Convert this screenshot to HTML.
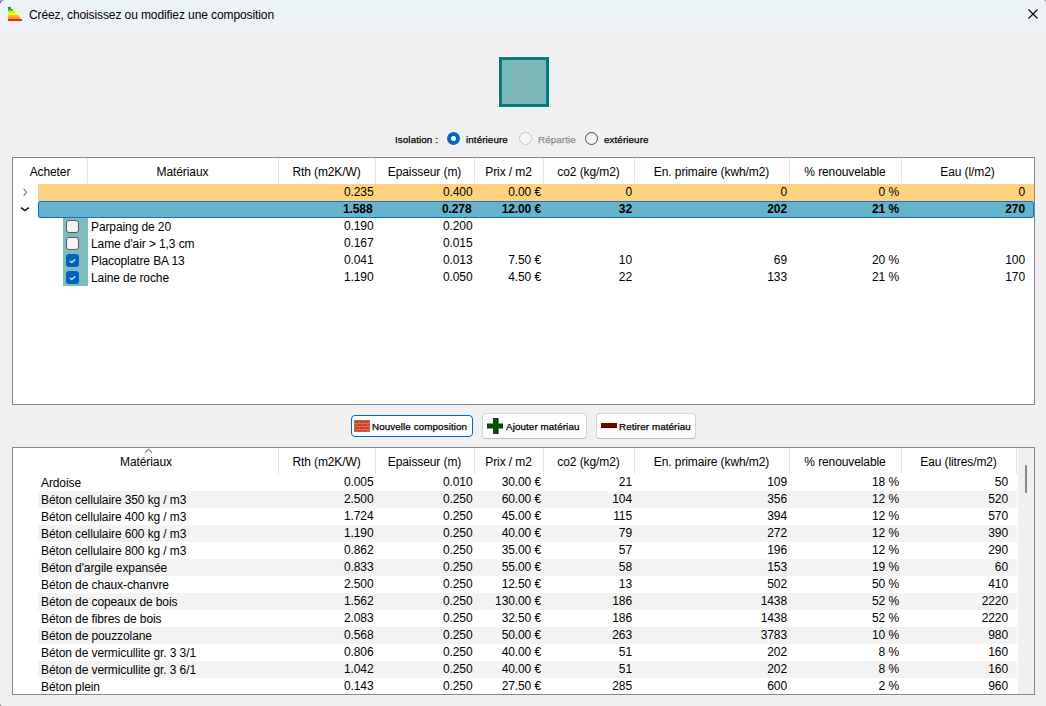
<!DOCTYPE html>
<html><head><meta charset="utf-8"><style>
html,body{margin:0;padding:0}
body{width:1046px;height:706px;position:relative;overflow:hidden;background:#F0F0F0;font-family:"Liberation Sans",sans-serif;color:#000}
.t,.h,.s{position:absolute;white-space:nowrap}
.t{font-size:12.0px;line-height:16px;letter-spacing:-0.1px}
.h{font-size:12.0px;line-height:26px;letter-spacing:-0.1px}
.s{font-size:9.8px;line-height:14px;letter-spacing:0.1px;-webkit-text-stroke:0.25px currentColor}
.b{font-weight:bold}
.c{text-align:center}
</style></head><body>
<div style="position:absolute;left:0px;top:0px;width:1046px;height:30px;background:#EBF3F7"></div>
<div style="position:absolute;left:8px;top:7px;width:3px;height:2px;background:#1F9A1F"></div>
<div style="position:absolute;left:8px;top:9px;width:5px;height:2px;background:#2FC62F"></div>
<div style="position:absolute;left:8px;top:11px;width:7px;height:2px;background:#C6EE3A"></div>
<div style="position:absolute;left:8px;top:13px;width:9px;height:2px;background:#FFF800"></div>
<div style="position:absolute;left:8px;top:15px;width:11px;height:2px;background:#FFC400"></div>
<div style="position:absolute;left:8px;top:17px;width:12px;height:2px;background:#FF9430"></div>
<div style="position:absolute;left:8px;top:19px;width:14px;height:2px;background:#FF1E1E"></div>
<div class="t" style="left:29px;top:8px;line-height:14px;color:#000">Créez, choisissez ou modifiez une composition</div>
<svg style="position:absolute;left:1027px;top:8px" width="12" height="12" viewBox="0 0 12 12"><path d="M1.5 1.5 L10.5 10.5 M10.5 1.5 L1.5 10.5" stroke="#000" stroke-width="1.1" fill="none"/></svg>
<div style="position:absolute;left:499px;top:57px;width:50px;height:50px;box-sizing:border-box;border:3px solid #007C7C;background:#7BB7B9;outline:1px solid #F7F7F7"></div>
<div class="s" style="left:395px;top:133px;">Isolation :</div>
<div style="position:absolute;left:447px;top:132px;width:13px;height:13px;border-radius:50%;background:#0067C0"></div>
<div style="position:absolute;left:451px;top:136px;width:5px;height:5px;border-radius:50%;background:#fff"></div>
<div class="s" style="left:466px;top:133px;">intérieure</div>
<div style="position:absolute;left:519px;top:132px;width:13px;height:13px;box-sizing:border-box;border-radius:50%;border:1px solid #C8C8C8;background:#F6F6F6"></div>
<div class="s" style="left:538px;top:133px;color:#8C8C8C">Répartie</div>
<div style="position:absolute;left:585px;top:132px;width:13px;height:13px;box-sizing:border-box;border-radius:50%;border:1px solid #4A4A4A;background:#F3F3F3"></div>
<div class="s" style="left:604px;top:133px;">extérieure</div>
<div style="position:absolute;left:12px;top:157px;width:1023px;height:248px;box-sizing:border-box;border:1px solid #828790;background:#fff"></div>
<div style="position:absolute;left:87px;top:158px;width:1px;height:26px;background:#E5E5E5"></div>
<div style="position:absolute;left:278px;top:158px;width:1px;height:26px;background:#E5E5E5"></div>
<div style="position:absolute;left:375px;top:158px;width:1px;height:26px;background:#E5E5E5"></div>
<div style="position:absolute;left:474px;top:158px;width:1px;height:26px;background:#E5E5E5"></div>
<div style="position:absolute;left:543px;top:158px;width:1px;height:26px;background:#E5E5E5"></div>
<div style="position:absolute;left:634px;top:158px;width:1px;height:26px;background:#E5E5E5"></div>
<div style="position:absolute;left:789px;top:158px;width:1px;height:26px;background:#E5E5E5"></div>
<div style="position:absolute;left:901px;top:158px;width:1px;height:26px;background:#E5E5E5"></div>
<div class="h c" style="left:13px;width:74px;top:159px;">Acheter</div>
<div class="h c" style="left:87px;width:191px;top:159px;">Matériaux</div>
<div class="h c" style="left:278px;width:97px;top:159px;">Rth (m2K/W)</div>
<div class="h c" style="left:375px;width:99px;top:159px;">Epaisseur (m)</div>
<div class="h c" style="left:474px;width:69px;top:159px;">Prix / m2</div>
<div class="h c" style="left:543px;width:91px;top:159px;">co2 (kg/m2)</div>
<div class="h c" style="left:634px;width:155px;top:159px;">En. primaire (kwh/m2)</div>
<div class="h c" style="left:789px;width:112px;top:159px;">% renouvelable</div>
<div class="h c" style="left:901px;width:133px;top:159px;">Eau (l/m2)</div>
<div style="position:absolute;left:38px;top:184px;width:996px;height:17px;background:#FED27F"></div>
<div style="position:absolute;left:38px;top:201px;width:996px;height:17px;box-sizing:border-box;border:1px solid #0A72D2;border-radius:2px;background:#66B4CC"></div>
<svg style="position:absolute;left:21px;top:187px" width="10" height="11" viewBox="0 0 10 11"><path d="M2.6 1.6 L5.6 5.2 L2.6 8.8" stroke="#7A7A7A" stroke-width="1.1" fill="none"/></svg>
<svg style="position:absolute;left:20px;top:205px" width="11" height="8" viewBox="0 0 11 8"><path d="M1 2.6 L4.9 5.6 L8.8 2.6" stroke="#111" stroke-width="1.4" fill="none"/></svg>
<div class="t r" style="right:672.5px;top:184px;">0.235</div>
<div class="t r" style="right:573.5px;top:184px;">0.400</div>
<div class="t r" style="right:505px;top:184px;">0.00 €</div>
<div class="t r" style="right:414px;top:184px;">0</div>
<div class="t r" style="right:259px;top:184px;">0</div>
<div class="t r" style="right:147px;top:184px;">0 %</div>
<div class="t r" style="right:21px;top:184px;">0</div>
<div class="t b r" style="right:673.5px;top:201px;">1.588</div>
<div class="t b r" style="right:574.5px;top:201px;">0.278</div>
<div class="t b r" style="right:505px;top:201px;">12.00 €</div>
<div class="t b r" style="right:414px;top:201px;">32</div>
<div class="t b r" style="right:259px;top:201px;">202</div>
<div class="t b r" style="right:147px;top:201px;">21 %</div>
<div class="t b r" style="right:21px;top:201px;">270</div>
<div style="position:absolute;left:63px;top:218px;width:25px;height:68px;background:#7FBCBC"></div>
<div style="position:absolute;left:66px;top:220px;width:13px;height:13px;box-sizing:border-box;border-radius:3px;border:1px solid #5A5A5A;background:#F3F3F3"></div>
<div class="t" style="left:91px;top:219px;">Parpaing de 20</div>
<div class="t r" style="right:672.5px;top:218px;">0.190</div>
<div class="t r" style="right:573.5px;top:218px;">0.200</div>
<div style="position:absolute;left:66px;top:237px;width:13px;height:13px;box-sizing:border-box;border-radius:3px;border:1px solid #5A5A5A;background:#F3F3F3"></div>
<div class="t" style="left:91px;top:236px;">Lame d'air &gt; 1,3 cm</div>
<div class="t r" style="right:672.5px;top:235px;">0.167</div>
<div class="t r" style="right:573.5px;top:235px;">0.015</div>
<div style="position:absolute;left:66px;top:254px;width:13px;height:13px;border-radius:3px;background:#0063C2"></div>
<svg style="position:absolute;left:66px;top:254px" width="13" height="13" viewBox="0 0 13 13"><path d="M3.7 6.9 L5.7 8.5 L9.3 5.3" stroke="#fff" stroke-width="1.05" fill="none"/></svg>
<div class="t" style="left:91px;top:253px;">Placoplatre BA 13</div>
<div class="t r" style="right:672.5px;top:252px;">0.041</div>
<div class="t r" style="right:573.5px;top:252px;">0.013</div>
<div class="t r" style="right:505px;top:252px;">7.50 €</div>
<div class="t r" style="right:414px;top:252px;">10</div>
<div class="t r" style="right:259px;top:252px;">69</div>
<div class="t r" style="right:147px;top:252px;">20 %</div>
<div class="t r" style="right:21px;top:252px;">100</div>
<div style="position:absolute;left:66px;top:271px;width:13px;height:13px;border-radius:3px;background:#0063C2"></div>
<svg style="position:absolute;left:66px;top:271px" width="13" height="13" viewBox="0 0 13 13"><path d="M3.7 6.9 L5.7 8.5 L9.3 5.3" stroke="#fff" stroke-width="1.05" fill="none"/></svg>
<div class="t" style="left:91px;top:270px;">Laine de roche</div>
<div class="t r" style="right:672.5px;top:269px;">1.190</div>
<div class="t r" style="right:573.5px;top:269px;">0.050</div>
<div class="t r" style="right:505px;top:269px;">4.50 €</div>
<div class="t r" style="right:414px;top:269px;">22</div>
<div class="t r" style="right:259px;top:269px;">133</div>
<div class="t r" style="right:147px;top:269px;">21 %</div>
<div class="t r" style="right:21px;top:269px;">170</div>
<div style="position:absolute;left:351px;top:415px;width:122px;height:22px;box-sizing:border-box;border:1px solid #0067C0;border-radius:4px;background:#fff"></div>
<svg style="position:absolute;left:354px;top:420px" width="16" height="12" viewBox="0 0 16 12"><rect x="0.5" y="0.5" width="15" height="11" fill="#D63D1F" stroke="#A8705E" stroke-width="1"/><path d="M1 3.5H15M1 6.5H15M1 9.5H15" stroke="#E8856A" stroke-width="0.7" fill="none"/><path d="M5.5 1V3.5M10.5 1V3.5M3.5 3.5V6.5M8.5 3.5V6.5M13.5 3.5V6.5M5.5 6.5V9.5M10.5 6.5V9.5M3.5 9.5V11M8.5 9.5V11M13.5 9.5V11" stroke="#E07A60" stroke-width="0.5" fill="none"/></svg>
<div class="s" style="left:372px;top:420px;">Nouvelle composition</div>
<div style="position:absolute;left:482px;top:413px;width:105px;height:26px;box-sizing:border-box;border:1px solid #D3D3D3;border-bottom-color:#BDBDBD;border-radius:4px;background:#FDFDFD"></div>
<svg style="position:absolute;left:487px;top:418px" width="16" height="16" viewBox="0 0 16 16"><path d="M6 0H11V5.5H16V10.5H11V16H6V10.5H0V5.5H6Z" fill="#005200"/><path d="M11 0V5.5M16 5.5V10.5M11 10.5V16" stroke="#001800" stroke-width="1" fill="none"/></svg>
<div class="s" style="left:506px;top:420px;">Ajouter matériau</div>
<div style="position:absolute;left:596px;top:413px;width:100px;height:26px;box-sizing:border-box;border:1px solid #D3D3D3;border-bottom-color:#BDBDBD;border-radius:4px;background:#FDFDFD"></div>
<div style="position:absolute;left:601px;top:423px;width:16px;height:5px;background:#7A0000;border-bottom:1px solid #4A0000;box-sizing:border-box"></div>
<div class="s" style="left:619px;top:420px;">Retirer matériau</div>
<div style="position:absolute;left:12px;top:447px;width:1023px;height:248px;box-sizing:border-box;border:1px solid #828790;background:#fff"></div>
<div style="position:absolute;left:1018px;top:448px;width:16px;height:246px;background:#F0F0F0"></div>
<div style="position:absolute;left:1025px;top:465px;width:2px;height:28px;background:#868686;border-radius:1px"></div>
<div style="position:absolute;left:278px;top:448px;width:1px;height:26px;background:#E5E5E5"></div>
<div style="position:absolute;left:375px;top:448px;width:1px;height:26px;background:#E5E5E5"></div>
<div style="position:absolute;left:474px;top:448px;width:1px;height:26px;background:#E5E5E5"></div>
<div style="position:absolute;left:543px;top:448px;width:1px;height:26px;background:#E5E5E5"></div>
<div style="position:absolute;left:634px;top:448px;width:1px;height:26px;background:#E5E5E5"></div>
<div style="position:absolute;left:789px;top:448px;width:1px;height:26px;background:#E5E5E5"></div>
<div style="position:absolute;left:901px;top:448px;width:1px;height:26px;background:#E5E5E5"></div>
<div style="position:absolute;left:1016px;top:448px;width:1px;height:26px;background:#E5E5E5"></div>
<div class="h c" style="left:87px;width:118px;top:449px;">Matériaux</div>
<div class="h c" style="left:278px;width:97px;top:449px;">Rth (m2K/W)</div>
<div class="h c" style="left:375px;width:99px;top:449px;">Epaisseur (m)</div>
<div class="h c" style="left:474px;width:69px;top:449px;">Prix / m2</div>
<div class="h c" style="left:543px;width:91px;top:449px;">co2 (kg/m2)</div>
<div class="h c" style="left:634px;width:155px;top:449px;">En. primaire (kwh/m2)</div>
<div class="h c" style="left:789px;width:112px;top:449px;">% renouvelable</div>
<div class="h c" style="left:901px;width:115px;top:449px;">Eau (litres/m2)</div>
<svg style="position:absolute;left:143px;top:447px" width="11" height="7" viewBox="0 0 11 7"><path d="M1.9 5.6 L5.5 2.2 L9.1 5.6" stroke="#3A3A3A" stroke-width="1" fill="none"/></svg>
<div style="position:absolute;left:13px;top:474px;width:1005px;height:220px;overflow:hidden">
<div class="t" style="left:28px;top:1px">Ardoise</div>
<div class="t r" style="right:644.5px;top:0px">0.005</div>
<div class="t r" style="right:545.5px;top:0px">0.010</div>
<div class="t r" style="right:477px;top:0px">30.00 €</div>
<div class="t r" style="right:386px;top:0px">21</div>
<div class="t r" style="right:231px;top:0px">109</div>
<div class="t r" style="right:119px;top:0px">18 %</div>
<div class="t r" style="right:10px;top:0px">50</div>
<div style="position:absolute;left:25px;top:17px;width:979px;height:17px;background:#F3F3F3"></div>
<div class="t" style="left:28px;top:18px">Béton cellulaire 350 kg / m3</div>
<div class="t r" style="right:644.5px;top:17px">2.500</div>
<div class="t r" style="right:545.5px;top:17px">0.250</div>
<div class="t r" style="right:477px;top:17px">60.00 €</div>
<div class="t r" style="right:386px;top:17px">104</div>
<div class="t r" style="right:231px;top:17px">356</div>
<div class="t r" style="right:119px;top:17px">12 %</div>
<div class="t r" style="right:10px;top:17px">520</div>
<div class="t" style="left:28px;top:35px">Béton cellulaire 400 kg / m3</div>
<div class="t r" style="right:644.5px;top:34px">1.724</div>
<div class="t r" style="right:545.5px;top:34px">0.250</div>
<div class="t r" style="right:477px;top:34px">45.00 €</div>
<div class="t r" style="right:386px;top:34px">115</div>
<div class="t r" style="right:231px;top:34px">394</div>
<div class="t r" style="right:119px;top:34px">12 %</div>
<div class="t r" style="right:10px;top:34px">570</div>
<div style="position:absolute;left:25px;top:51px;width:979px;height:17px;background:#F3F3F3"></div>
<div class="t" style="left:28px;top:52px">Béton cellulaire 600 kg / m3</div>
<div class="t r" style="right:644.5px;top:51px">1.190</div>
<div class="t r" style="right:545.5px;top:51px">0.250</div>
<div class="t r" style="right:477px;top:51px">40.00 €</div>
<div class="t r" style="right:386px;top:51px">79</div>
<div class="t r" style="right:231px;top:51px">272</div>
<div class="t r" style="right:119px;top:51px">12 %</div>
<div class="t r" style="right:10px;top:51px">390</div>
<div class="t" style="left:28px;top:69px">Béton cellulaire 800 kg / m3</div>
<div class="t r" style="right:644.5px;top:68px">0.862</div>
<div class="t r" style="right:545.5px;top:68px">0.250</div>
<div class="t r" style="right:477px;top:68px">35.00 €</div>
<div class="t r" style="right:386px;top:68px">57</div>
<div class="t r" style="right:231px;top:68px">196</div>
<div class="t r" style="right:119px;top:68px">12 %</div>
<div class="t r" style="right:10px;top:68px">290</div>
<div style="position:absolute;left:25px;top:85px;width:979px;height:17px;background:#F3F3F3"></div>
<div class="t" style="left:28px;top:86px">Béton d'argile expansée</div>
<div class="t r" style="right:644.5px;top:85px">0.833</div>
<div class="t r" style="right:545.5px;top:85px">0.250</div>
<div class="t r" style="right:477px;top:85px">55.00 €</div>
<div class="t r" style="right:386px;top:85px">58</div>
<div class="t r" style="right:231px;top:85px">153</div>
<div class="t r" style="right:119px;top:85px">19 %</div>
<div class="t r" style="right:10px;top:85px">60</div>
<div class="t" style="left:28px;top:103px">Béton de chaux-chanvre</div>
<div class="t r" style="right:644.5px;top:102px">2.500</div>
<div class="t r" style="right:545.5px;top:102px">0.250</div>
<div class="t r" style="right:477px;top:102px">12.50 €</div>
<div class="t r" style="right:386px;top:102px">13</div>
<div class="t r" style="right:231px;top:102px">502</div>
<div class="t r" style="right:119px;top:102px">50 %</div>
<div class="t r" style="right:10px;top:102px">410</div>
<div style="position:absolute;left:25px;top:119px;width:979px;height:17px;background:#F3F3F3"></div>
<div class="t" style="left:28px;top:120px">Béton de copeaux de bois</div>
<div class="t r" style="right:644.5px;top:119px">1.562</div>
<div class="t r" style="right:545.5px;top:119px">0.250</div>
<div class="t r" style="right:477px;top:119px">130.00 €</div>
<div class="t r" style="right:386px;top:119px">186</div>
<div class="t r" style="right:231px;top:119px">1438</div>
<div class="t r" style="right:119px;top:119px">52 %</div>
<div class="t r" style="right:10px;top:119px">2220</div>
<div class="t" style="left:28px;top:137px">Béton de fibres de bois</div>
<div class="t r" style="right:644.5px;top:136px">2.083</div>
<div class="t r" style="right:545.5px;top:136px">0.250</div>
<div class="t r" style="right:477px;top:136px">32.50 €</div>
<div class="t r" style="right:386px;top:136px">186</div>
<div class="t r" style="right:231px;top:136px">1438</div>
<div class="t r" style="right:119px;top:136px">52 %</div>
<div class="t r" style="right:10px;top:136px">2220</div>
<div style="position:absolute;left:25px;top:153px;width:979px;height:17px;background:#F3F3F3"></div>
<div class="t" style="left:28px;top:154px">Béton de pouzzolane</div>
<div class="t r" style="right:644.5px;top:153px">0.568</div>
<div class="t r" style="right:545.5px;top:153px">0.250</div>
<div class="t r" style="right:477px;top:153px">50.00 €</div>
<div class="t r" style="right:386px;top:153px">263</div>
<div class="t r" style="right:231px;top:153px">3783</div>
<div class="t r" style="right:119px;top:153px">10 %</div>
<div class="t r" style="right:10px;top:153px">980</div>
<div class="t" style="left:28px;top:171px">Béton de vermicullite gr. 3 3/1</div>
<div class="t r" style="right:644.5px;top:170px">0.806</div>
<div class="t r" style="right:545.5px;top:170px">0.250</div>
<div class="t r" style="right:477px;top:170px">40.00 €</div>
<div class="t r" style="right:386px;top:170px">51</div>
<div class="t r" style="right:231px;top:170px">202</div>
<div class="t r" style="right:119px;top:170px">8 %</div>
<div class="t r" style="right:10px;top:170px">160</div>
<div style="position:absolute;left:25px;top:187px;width:979px;height:17px;background:#F3F3F3"></div>
<div class="t" style="left:28px;top:188px">Béton de vermicullite gr. 3 6/1</div>
<div class="t r" style="right:644.5px;top:187px">1.042</div>
<div class="t r" style="right:545.5px;top:187px">0.250</div>
<div class="t r" style="right:477px;top:187px">40.00 €</div>
<div class="t r" style="right:386px;top:187px">51</div>
<div class="t r" style="right:231px;top:187px">202</div>
<div class="t r" style="right:119px;top:187px">8 %</div>
<div class="t r" style="right:10px;top:187px">160</div>
<div class="t" style="left:28px;top:205px">Béton plein</div>
<div class="t r" style="right:644.5px;top:204px">0.143</div>
<div class="t r" style="right:545.5px;top:204px">0.250</div>
<div class="t r" style="right:477px;top:204px">27.50 €</div>
<div class="t r" style="right:386px;top:204px">285</div>
<div class="t r" style="right:231px;top:204px">600</div>
<div class="t r" style="right:119px;top:204px">2 %</div>
<div class="t r" style="right:10px;top:204px">960</div>
</div>
<div style="position:absolute;left:0px;top:0px;width:1px;height:1px;background:#B8B8C0"></div>
<div style="position:absolute;left:1px;top:0px;width:1px;height:1px;background:#9A9AA6"></div>
<div style="position:absolute;left:2px;top:0px;width:1px;height:1px;background:#A8A8B0"></div>
<div style="position:absolute;left:3px;top:0px;width:1px;height:1px;background:#C8CCD0"></div>
<div style="position:absolute;left:4px;top:0px;width:1px;height:1px;background:#DDE2E6"></div>
<div style="position:absolute;left:0px;top:1px;width:1px;height:1px;background:#6E6E84"></div>
<div style="position:absolute;left:1px;top:1px;width:1px;height:1px;background:#9EA2B0"></div>
<div style="position:absolute;left:2px;top:1px;width:1px;height:1px;background:#DDE6EA"></div>
<div style="position:absolute;left:0px;top:2px;width:1px;height:1px;background:#7A7A90"></div>
<div style="position:absolute;left:0px;top:3px;width:1px;height:1px;background:#C8CCD4"></div>
<div style="position:absolute;left:1045px;top:0px;width:1px;height:1px;background:#A0A0A0"></div>
<div style="position:absolute;left:1044px;top:0px;width:1px;height:1px;background:#C8C8C8"></div>
<div style="position:absolute;left:1045px;top:1px;width:1px;height:1px;background:#C8C8C8"></div>
<div style="position:absolute;left:0px;top:705px;width:1px;height:1px;background:#8A8A8A"></div>
<div style="position:absolute;left:0px;top:704px;width:1px;height:1px;background:#C0C0C0"></div>
<div style="position:absolute;left:1px;top:705px;width:1px;height:1px;background:#C8C8C8"></div>
</body></html>
